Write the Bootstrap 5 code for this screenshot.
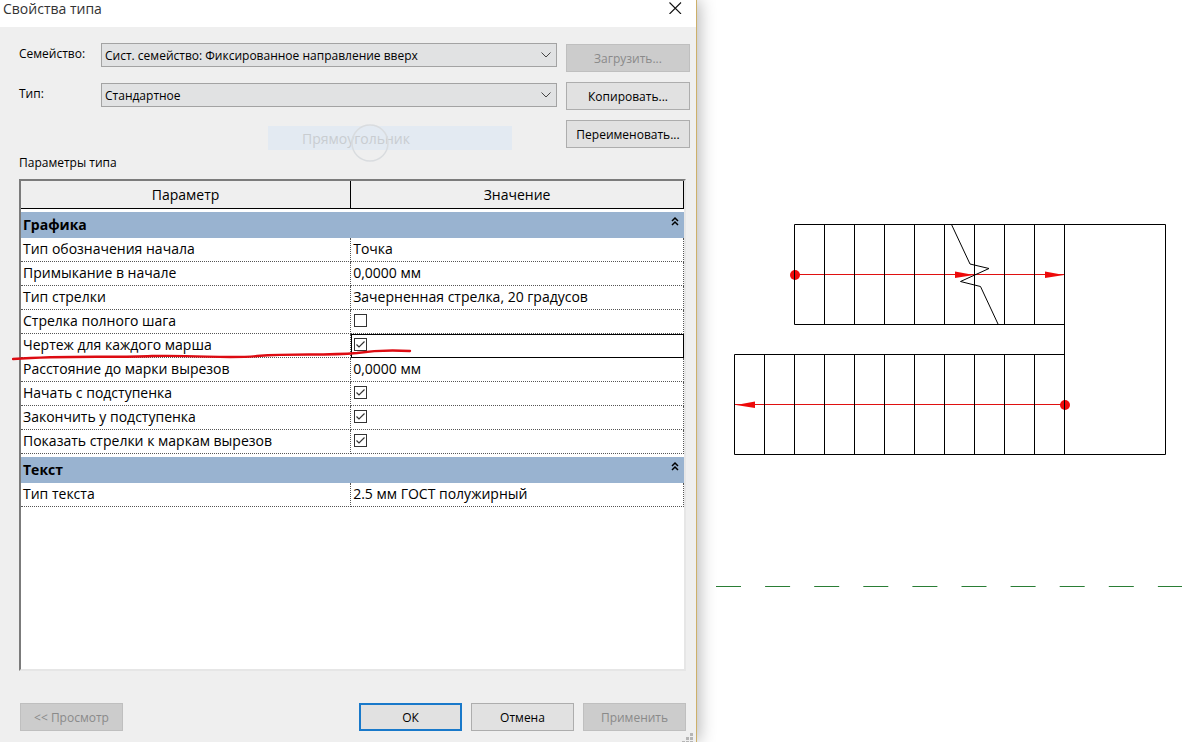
<!DOCTYPE html>
<html lang="ru">
<head>
<meta charset="utf-8">
<meta name="viewport" content="width=device-width, initial-scale=1">
<title>Свойства типа</title>
<link href="https://cdn.jsdelivr.net/npm/bootstrap@5.3.0/dist/css/bootstrap.min.css" rel="stylesheet">
<style>
  body { font: 12px/18px "Open Sans", "Noto Sans", sans-serif; color: #000; background: #fff; }
  .workspace { display: grid; grid-template-columns: 697fr 485fr; overflow: hidden; }
  .type-dialog { background: #efefef; border-right: 1px solid #cdb06a; box-shadow: 2px 0 16px rgba(0,0,0,.3); z-index: 1; }
  .title-bar { background: #fff; height: 27px; padding: 0 14px 9px 3px; font-size: 14px; color: #333; }
  .title-bar h1 { font-size: 14px; line-height: 18px; }
  .close-btn { width: 14px; height: 14px; }
  .type-form { padding: 16px 6px 0 19px; column-gap: 9px; }
  .form-line { display: grid; grid-template-columns: 82px 1fr; height: 24px; margin-bottom: 16px; }
  .form-line label { line-height: 22px; }
  .type-select { height: 24px; padding: 1px 24px 0 3px; font-size: 12px; line-height: 22px; color: #000; border: 1px solid #a3a3a3; border-radius: 0; appearance: none;
    background: #e1e2e3 url("data:image/svg+xml,%3Csvg xmlns='http://www.w3.org/2000/svg' viewBox='0 0 10 6'%3E%3Cpath d='M.5.5 5 5 9.5.5' fill='none' stroke='%23444'/%3E%3C/svg%3E") no-repeat right 5px center / 10px 6px; }
  .side-buttons { width: 124px; gap: 10px; padding-top: 1px; }
  .dlg-btn { height: 28px; padding: 1px 0 0; font-size: 12px; line-height: 25px; color: #000; background: #e1e1e1; border: 1px solid #adadad; border-radius: 0; }
  .dlg-btn:disabled { color: #8a8a8a; background: #ccc; border-color: #bfbfbf; opacity: 1; }
  .dlg-btn.default-btn { border: 2px solid #1979ca; line-height: 23px; }
  .ghost-item { width: 244px; height: 24px; margin: 19px 45px 0 auto; background: #e3eaf2; color: #c9cdd1; font-size: 14px; line-height: 25px; padding-left: 34px; }
  .form-line + .ghost-item { margin-top: 3px; }
  .ghost-item svg { left: 83px; top: -2px; }
  .type-form .ghost-item { margin-top: 19px; }
  .form-line:has(+ .ghost-item) { margin-bottom: 0; }
  .params-label { padding: 4px 0 7px 19px; }
  .param-frame { margin: 0 10px 0 19px; background: #fff; border: 2px solid; border-color: #7b7b7b #e6e6e6 #e6e6e6 #7b7b7b; }
  .param-grid { width: 100%; table-layout: fixed; border-collapse: separate; border-spacing: 0; font-size: 14px; line-height: 22px; }
  .param-grid thead th { height: 28px; padding: 0; background: #efefef; border-right: 1px solid #000; border-bottom: 1px solid #000; font-weight: 400; text-align: center; }
  .param-grid .group-row th { height: 29px; padding: 0 4px 0 2px; border-top: 3px solid #fff; background: #99b3d0; background-clip: padding-box; }
  .param-grid .prop-row > * { height: 24px; padding: 0 0 1px 2px; border-right: 1px dotted #555; border-bottom: 1px dotted #555; font-weight: 400; white-space: nowrap; }
  .param-grid .prop-row > .active-cell { outline: 1px solid #000; outline-offset: -1px; }
  .fold-btn { width: 10px; height: 12px; margin-bottom: 9px; }
  .tick { display: block; appearance: none; width: 13px; height: 13px; margin: 0 0 2px 1px; background: #fff; border: 1px solid #333; }
  .tick:checked { background: url("data:image/svg+xml,%3Csvg xmlns='http://www.w3.org/2000/svg' viewBox='0 0 11 11'%3E%3Cpath d='M1.5 5.5 4 8 9.500 2.500' fill='none' stroke='%23333' stroke-width='1.2'/%3E%3C/svg%3E") center / 11px 11px; }
  .red-mark { left: -9px; top: 15px; z-index: 2; pointer-events: none; }
  .dlg-footer { padding: 32px 10px 11px 20px; gap: 9px; }
  .dlg-footer .dlg-btn { width: 103px; }
  .size-grip { right: 2px; bottom: 0; }
  .plan { display: block; width: 100%; height: auto; }
</style>
</head>
<body>
<main class="workspace min-vh-100">
  <section class="type-dialog d-flex flex-column position-relative">
    <header class="title-bar d-flex justify-content-between align-items-start">
      <h1 class="m-0 fw-normal">Свойства типа</h1>
      <button type="button" class="close-btn btn p-0 border-0 d-flex mt-0" aria-label="Закрыть">
        <svg width="14" height="14" viewBox="0 0 14 14"><path d="M1.500 2.500 13 14M13 2.500 1.500 14" stroke="#111" stroke-width="1.100"/></svg>
      </button>
    </header>

    <form class="type-form d-flex">
      <div class="flex-grow-1">
        <div class="form-line">
          <label for="family">Семейство:</label>
          <select id="family" class="type-select w-100"><option>Сист. семейство: Фиксированное направление вверх</option></select>
        </div>
        <div class="form-line">
          <label for="type">Тип:</label>
          <select id="type" class="type-select w-100"><option>Стандартное</option></select>
        </div>
        <div class="ghost-item position-relative">Прямоугольник
          <svg class="position-absolute" width="38" height="38" viewBox="0 0 38 38"><circle cx="19" cy="19" r="18" fill="none" stroke="#d9dcdf" stroke-width="1.500"/></svg>
        </div>
      </div>
      <div class="side-buttons d-flex flex-column">
        <button type="button" class="btn dlg-btn" disabled>Загрузить...</button>
        <button type="button" class="btn dlg-btn">Копировать...</button>
        <button type="button" class="btn dlg-btn">Переименовать...</button>
      </div>
    </form>

    <div class="params-label">Параметры типа</div>
    <div class="param-frame flex-grow-1">
      <table class="param-grid">
        <colgroup><col style="width:49.8%"><col></colgroup>
        <thead><tr><th scope="col">Параметр</th><th scope="col">Значение</th></tr></thead>
        <tbody>
          <tr class="group-row"><th colspan="2"><div class="d-flex justify-content-between align-items-center">Графика
            <button type="button" class="fold-btn btn p-0 border-0 d-flex" aria-label="Свернуть"><svg width="10" height="12" viewBox="0 0 10 12"><path d="M2 6 5 3 8 6M2 10 5 7 8 10" fill="none" stroke="#000" stroke-width="1.500"/></svg></button></div></th></tr>
          <tr class="prop-row"><th scope="row">Тип обозначения начала</th><td>Точка</td></tr>
          <tr class="prop-row"><th scope="row">Примыкание в начале</th><td>0,0000 мм</td></tr>
          <tr class="prop-row"><th scope="row">Тип стрелки</th><td>Зачерненная стрелка, 20 градусов</td></tr>
          <tr class="prop-row"><th scope="row"><label for="c1">Стрелка полного шага</label></th><td><input id="c1" class="tick" type="checkbox"></td></tr>
          <tr class="prop-row"><th scope="row" class="position-relative"><label for="c2">Чертеж для каждого марша</label>
            <svg class="red-mark position-absolute" width="400" height="14" viewBox="0 0 400 14"><path d="M1 10C60 6 100 9 140 7C190 6 215 10 245 7C285 4 310 7 345 4C365 1 380 1 398 2" fill="none" stroke="#dd0b12" stroke-width="2.400" stroke-linecap="round"/></svg></th>
            <td class="active-cell"><input id="c2" class="tick" type="checkbox" checked></td></tr>
          <tr class="prop-row"><th scope="row">Расстояние до марки вырезов</th><td>0,0000 мм</td></tr>
          <tr class="prop-row"><th scope="row"><label for="c3">Начать с подступенка</label></th><td><input id="c3" class="tick" type="checkbox" checked></td></tr>
          <tr class="prop-row"><th scope="row"><label for="c4">Закончить у подступенка</label></th><td><input id="c4" class="tick" type="checkbox" checked></td></tr>
          <tr class="prop-row"><th scope="row"><label for="c5">Показать стрелки к маркам вырезов</label></th><td><input id="c5" class="tick" type="checkbox" checked></td></tr>
          <tr class="group-row"><th colspan="2"><div class="d-flex justify-content-between align-items-center">Текст
            <button type="button" class="fold-btn btn p-0 border-0 d-flex" aria-label="Свернуть"><svg width="10" height="12" viewBox="0 0 10 12"><path d="M2 6 5 3 8 6M2 10 5 7 8 10" fill="none" stroke="#000" stroke-width="1.500"/></svg></button></div></th></tr>
          <tr class="prop-row"><th scope="row">Тип текста</th><td>2.5 мм ГОСТ полужирный</td></tr>
        </tbody>
      </table>
    </div>

    <footer class="dlg-footer d-flex">
      <button type="button" class="btn dlg-btn me-auto" disabled>&lt;&lt; Просмотр</button>
      <button type="button" class="btn dlg-btn default-btn">ОК</button>
      <button type="button" class="btn dlg-btn">Отмена</button>
      <button type="button" class="btn dlg-btn" disabled>Применить</button>
    </footer>
    <svg class="size-grip position-absolute" width="12" height="10" viewBox="0 0 12 10" fill="#b5b5b5"><path d="M8 1h3v3H8zM8 5h3v3H8zM4 5h3v3H4zM8 9h3v1H8zM4 9h3v1H4zM0 9h3v1H0z"/></svg>
  </section>

  <section>
    <svg class="plan" viewBox="0 0 485 742" role="img" aria-label="План лестницы">
      <g fill="none" stroke="#e01010">
        <path d="M97.500 274.500H367.500M37.500 404.500H367.500"/>
      </g>
      <g fill="#ee0a0a">
        <circle cx="98" cy="275" r="5"/><circle cx="368" cy="405" r="5"/>
        <path d="M258 271.500 277 275 258 278ZM348 271.500 367 275 348 278ZM58 401.500 39 405 58 408Z"/>
      </g>
      <g fill="none" stroke="#000">
        <path d="M97.500 224.500H468.500V454.500H37.500V354.500H367.500M97.500 224.500V324.500H367.500M367.500 224.500V454.500"/>
        <path d="M127.500 224V324M157.500 224V324M187.500 224V324M217.500 224V324M247.500 224V324M277.500 224V324M307.500 224V324M337.500 224V324"/>
        <path d="M67.500 354V454M97.500 354V454M127.500 354V454M157.500 354V454M187.500 354V454M217.500 354V454M247.500 354V454M277.500 354V454M307.500 354V454M337.500 354V454"/>
        <path d="M254.500 224.500 273 264 292 268.500 263.500 281.500 283.500 286.500 301 324"/>
      </g>
      <path d="M19 586.500H485" stroke="#2a7d35" stroke-dasharray="25 24.100"/>
    </svg>
  </section>
</main>
<script src="https://cdn.jsdelivr.net/npm/bootstrap@5.3.0/dist/js/bootstrap.bundle.min.js"></script>
</body>
</html>
